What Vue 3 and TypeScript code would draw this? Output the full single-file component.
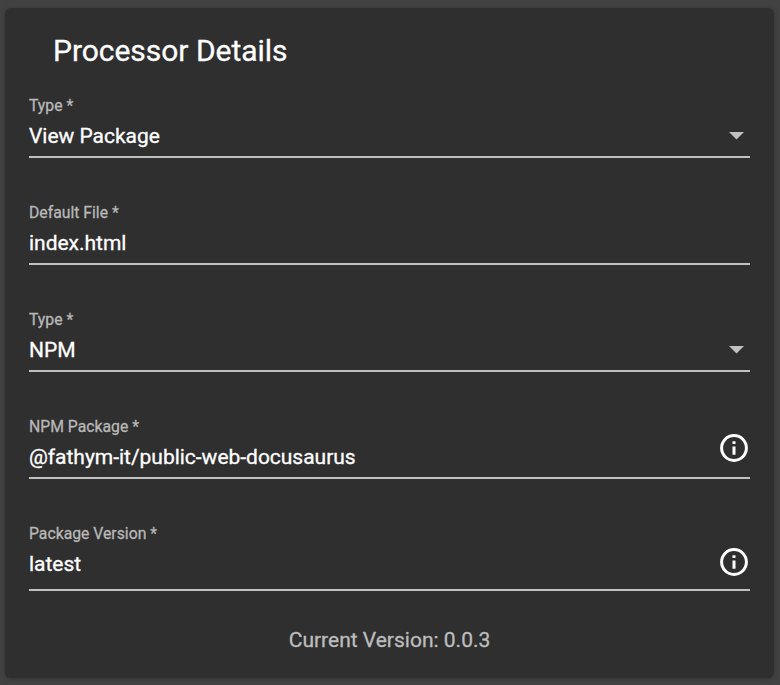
<script setup lang="ts">
interface Field {
  label: string
  value: string
  kind: 'select' | 'text' | 'info'
}

const fields: Field[] = [
  { label: 'Type *', value: 'View Package', kind: 'select' },
  { label: 'Default File *', value: 'index.html', kind: 'text' },
  { label: 'Type *', value: 'NPM', kind: 'select' },
  { label: 'NPM Package *', value: '@fathym-it/public-web-docusaurus', kind: 'info' },
  { label: 'Package Version *', value: 'latest', kind: 'info' },
]
</script>

<template>
  <main class="page">
    <section class="card">
      <h1 class="title">Processor Details</h1>
      <div v-for="(field, i) in fields" :key="i" class="field" :class="{ last: i === fields.length - 1 }">
        <div class="content">
          <div class="label">{{ field.label }}</div>
          <div class="value">{{ field.value }}</div>
        </div>
        <svg v-if="field.kind === 'select'" class="arrow" viewBox="0 0 15 8"><path d="M0 0h15L7.5 7.5z" /></svg>
        <svg v-if="field.kind === 'info'" class="info" viewBox="0 0 32 32">
          <circle cx="16" cy="16" r="12.4" />
          <path d="M14.500 9.200h3v2.800h-3zM14.500 14.500h3v8.300h-3z" />
        </svg>
      </div>
      <p class="version">Current Version: 0.0.3</p>
    </section>
  </main>
</template>

<style>
body {
  background: #424242;
}
</style>

<style scoped>
.page {
  box-sizing: border-box;
  height: 685px;
  padding: 8px 6px 7px 5px;
  background: #424242;
  font-family: Roboto, sans-serif;
  color: #fff;
  -webkit-text-stroke: 0.3px currentColor;
}
.card {
  box-sizing: border-box;
  height: 670px;
  padding: 25px 24px 24px;
  border-radius: 6px;
  background: #2f2f2f;
  box-shadow: 0 1px 4px rgba(0, 0, 0, 0.25);
}
.title {
  margin: 0 0 28px 24px;
  font-size: 30px;
  font-weight: 400;
  line-height: 36px;
  letter-spacing: -0.03px;
}
.field {
  box-sizing: border-box;
  display: flex;
  justify-content: space-between;
  height: 61px;
  margin-bottom: 46px;
  border-bottom: 2px solid #c1c1c1;
}
.field.last {
  height: 66px;
  margin-bottom: 35px;
}
.label {
  font-size: 15.75px;
  line-height: 18px;
  color: #b8b8b8;
}
.value {
  margin-top: 9px;
  font-size: 21px;
  line-height: 24px;
  letter-spacing: -0.02px;
}
.arrow {
  width: 15px;
  height: 8px;
  margin: 35px 6px 0 0;
  fill: #c1c1c1;
}
.info {
  width: 32px;
  height: 32px;
  margin: 14px 0 0;
  fill: #fff;
}
.info circle {
  fill: none;
  stroke: #fff;
  stroke-width: 3;
}
.last .info {
  margin-top: 21px;
}
.version {
  margin: 0;
  text-align: center;
  font-size: 21px;
  line-height: 28px;
  color: #bdbdbd;
}
</style>
